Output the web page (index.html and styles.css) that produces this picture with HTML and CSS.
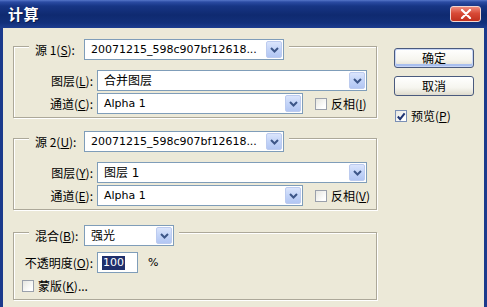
FILE: index.html
```html
<!DOCTYPE html>
<html lang="zh-CN">
<head>
<meta charset="utf-8">
<title>计算</title>
<link rel="stylesheet" href="styles.css">
</head>
<body>
<div class="window">
  <div class="titlebar">
    <span class="title">计算</span>
    <span class="close"><svg width="12" height="10" viewBox="0 0 12 10"><path d="M2 1 L10 9 M10 1 L2 9" stroke="#fff" stroke-width="2.2" stroke-linecap="round"/></svg></span>
  </div>
  <div class="frame">
    <div class="left">
      <div class="group">
        <div class="legend">
          <span class="hlabel">源 1(<u>S</u>):</span>
          <div class="select w-src"><span class="val">20071215_598c907bf12618...</span><span class="arrow"><svg width="9" height="6" viewBox="0 0 9 6"><path d="M1 1 L4.5 4.5 L8 1" fill="none" stroke="#3d5688" stroke-width="2"/></svg></span></div>
        </div>
        <div class="row r-layer">
          <span class="rlabel">图层(<u>L</u>):</span>
          <div class="select w-wide"><span class="val cjk">合并图层</span><span class="arrow"><svg width="9" height="6" viewBox="0 0 9 6"><path d="M1 1 L4.5 4.5 L8 1" fill="none" stroke="#3d5688" stroke-width="2"/></svg></span></div>
        </div>
        <div class="row r-chan">
          <span class="rlabel">通道(<u>C</u>):</span>
          <div class="select w-chan"><span class="val">Alpha 1</span><span class="arrow"><svg width="9" height="6" viewBox="0 0 9 6"><path d="M1 1 L4.5 4.5 L8 1" fill="none" stroke="#3d5688" stroke-width="2"/></svg></span></div>
          <span class="check"><span class="box"></span>反相(<u>I</u>)</span>
        </div>
      </div>

      <div class="group g2">
        <div class="legend">
          <span class="hlabel">源 2(<u>U</u>):</span>
          <div class="select w-src"><span class="val">20071215_598c907bf12618...</span><span class="arrow"><svg width="9" height="6" viewBox="0 0 9 6"><path d="M1 1 L4.5 4.5 L8 1" fill="none" stroke="#3d5688" stroke-width="2"/></svg></span></div>
        </div>
        <div class="row r-layer">
          <span class="rlabel">图层(<u>Y</u>):</span>
          <div class="select w-wide"><span class="val cjk">图层 1</span><span class="arrow"><svg width="9" height="6" viewBox="0 0 9 6"><path d="M1 1 L4.5 4.5 L8 1" fill="none" stroke="#3d5688" stroke-width="2"/></svg></span></div>
        </div>
        <div class="row r-chan">
          <span class="rlabel">通道(<u>E</u>):</span>
          <div class="select w-chan"><span class="val">Alpha 1</span><span class="arrow"><svg width="9" height="6" viewBox="0 0 9 6"><path d="M1 1 L4.5 4.5 L8 1" fill="none" stroke="#3d5688" stroke-width="2"/></svg></span></div>
          <span class="check"><span class="box"></span>反相(<u>V</u>)</span>
        </div>
      </div>

      <div class="group g3">
        <div class="legend">
          <span class="hlabel">混合(<u>B</u>):</span>
          <div class="select w-blend"><span class="val cjk">强光</span><span class="arrow"><svg width="9" height="6" viewBox="0 0 9 6"><path d="M1 1 L4.5 4.5 L8 1" fill="none" stroke="#3d5688" stroke-width="2"/></svg></span></div>
        </div>
        <div class="row r-op">
          <span class="rlabel">不透明度(<u>O</u>):</span>
          <div class="input"><span class="sel">100</span></div>
          <span class="pct">%</span>
        </div>
        <div class="row r-mask">
          <span class="box"></span>蒙版(<u>K</u>)...
        </div>
      </div>
    </div>

    <div class="right">
      <div class="btn default">确定</div>
      <div class="btn cancel">取消</div>
      <div class="check preview"><span class="box checked"><svg width="11" height="11" viewBox="0 0 11 11"><path d="M2 5.5 L4.5 8.5 L9.5 2" fill="none" stroke="#1f3473" stroke-width="2.2"/></svg></span>预览(<u>P</u>)</div>
    </div>
  </div>
</div>
</body>
</html>
```

FILE: styles.css
```css
* { box-sizing: border-box; }
html, body { margin: 0; padding: 0; }
body {
  width: 487px;
  height: 307px;
  overflow: hidden;
  background: #ece9d8;
  font-family: "Noto Sans CJK SC", "DejaVu Sans", sans-serif;
  font-size: 12px;
  line-height: 14px;
  color: #000;
}
u { text-decoration: underline; text-underline-offset: 1px; }

.window {
  width: 487px;
  height: 307px;
  display: flex;
  flex-direction: column;
}

.titlebar {
  height: 28px;
  flex: none;
  display: flex;
  align-items: center;
  justify-content: space-between;
  padding: 0 6px 0 8px;
  background: linear-gradient(180deg, #5676c9 0px, #2b4ba3 2px, #173585 6px, #0f2a70 15px, #12307b 23px, #1d3d90 28px);
}
.title {
  color: #fff;
  font-weight: bold;
  font-size: 15px;
  line-height: 18px;
  letter-spacing: 0.5px;
  text-shadow: 1px 1px 0 #0a1a4a;
}
.close {
  width: 31px;
  height: 16px;
  border: 1px solid #f2d6d0;
  border-radius: 3px;
  background: linear-gradient(180deg, #ee8a7c 0%, #d84a36 45%, #c0301e 100%);
  display: flex;
  align-items: center;
  justify-content: center;
}

.frame {
  flex: 1;
  display: flex;
  align-items: flex-start;
  padding: 18px 0 0 10px;
  border-left: 3px solid #1b3a8c;
  border-right: 3px solid #1b3a8c;
  background: #ece9d8;
}

.left { width: 364px; flex: none; }

.group {
  border: 1px solid #aca899;
  box-shadow: 1px 1px 0 #fff, inset 1px 1px 0 #fff;
  padding: 0 0 3px 0;
}
.group.g2 { margin-top: 20px; }
.group.g3 { margin-top: 22px; padding-bottom: 6px; }

.legend {
  display: flex;
  align-items: center;
  width: max-content;
  height: 21px;
  margin: -8px 0 0 15px;
  padding: 0 5px 0 6px;
  background: #ece9d8;
}
.hlabel { width: 49px; white-space: nowrap; }

.row {
  display: flex;
  align-items: center;
  height: 21px;
}
.r-layer { margin-top: 10px; }
.r-chan { margin-top: 2px; }
.r-op { margin-top: 6px; }
.r-mask { margin-top: 6px; height: 14px; padding-left: 8px; }

.rlabel {
  width: 79px;
  margin-right: 4px;
  text-align: right;
  white-space: nowrap;
}

.select {
  height: 21px;
  border: 1px solid #7f9db9;
  background: #fff;
  display: flex;
  align-items: center;
  justify-content: space-between;
  padding: 0 1px 0 6px;
}
.w-src { width: 200px; }
.w-wide { width: 270px; }
.w-chan { width: 206px; }
.w-blend { width: 90px; }

.val {
  font-family: "DejaVu Sans", "Noto Sans CJK SC", sans-serif;
  font-size: 11px;
  white-space: nowrap;
}
.val.cjk { font-size: 12px; }

.arrow {
  width: 16px;
  height: 17px;
  border: 1px solid #bccbef;
  border-radius: 2px;
  background: linear-gradient(180deg, #dbe5fc 0%, #c3d4f8 50%, #b2c6f3 100%);
  display: flex;
  align-items: center;
  justify-content: center;
}

.check {
  display: flex;
  align-items: center;
  margin-left: 12px;
  white-space: nowrap;
}
.box {
  width: 12px;
  height: 12px;
  flex: none;
  border: 1px solid #9aa0ab;
  background: linear-gradient(135deg, #e6e6e0 0%, #fff 80%);
  margin-right: 4px;
  display: flex;
  align-items: center;
  justify-content: center;
}
.box.checked { border-color: #7a8fb5; }

.input {
  width: 41px;
  height: 21px;
  border: 1px solid #7f9db9;
  background: #fff;
  display: flex;
  align-items: center;
  padding-left: 4px;
}
.sel {
  background: #1f2f6c;
  color: #fff;
  font-family: "DejaVu Sans", sans-serif;
  font-size: 11px;
  line-height: 14px;
  padding: 0 1px;
}
.pct {
  margin-left: 10px;
  font-family: "DejaVu Sans", sans-serif;
  font-size: 11px;
}

.right {
  width: 80px;
  flex: none;
  margin-left: 17px;
  margin-top: 2px;
  display: flex;
  flex-direction: column;
}
.btn {
  width: 80px;
  height: 20px;
  border: 1px solid #4a5a7e;
  border-radius: 3px;
  background: linear-gradient(180deg, #ffffff 0%, #f6f5ef 60%, #dedbcd 100%);
  display: flex;
  align-items: center;
  justify-content: center;
}
.btn.default {
  box-shadow: inset 0 0 0 1px #c6d5f6, inset 0 -2px 0 1px #a9bfee;
}
.btn.cancel { margin-top: 8px; }
.preview { margin: 13px 0 0 1px; }
```
